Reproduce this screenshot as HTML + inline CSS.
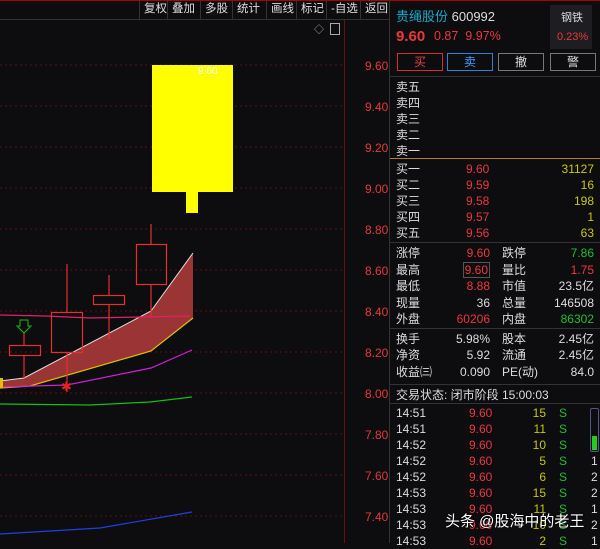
<!DOCTYPE html><html><head><meta charset="utf-8"><style>
body{margin:0;width:600px;height:543px;background:#0d0d10;overflow:hidden;position:relative;font-family:"Liberation Sans","Noto Sans CJK SC",sans-serif;font-size:12px;color:#ddd}
.a{position:absolute;white-space:nowrap}
.r{color:#e8383c}.y{color:#c8c800}.g{color:#1bbf2c}.w{color:#ddd}.c{color:#1aa8c8}
.tb{position:absolute;top:0;height:19px;line-height:19px;color:#ddd;font-size:11.5px;border-left:1px solid #333;padding:0 4px}
.row{position:absolute;left:396px;width:200px;height:16px;line-height:16px;font-size:12px}
.row span{position:absolute}
</style></head><body>
<div class="a" style="left:0;top:0;width:600px;height:1px;background:#a00"></div>
<div class="a" style="left:0;top:19px;width:390px;height:1px;background:#333"></div>
<div class="tb" style="left:139px">复权</div><div class="tb" style="left:167px">叠加</div><div class="tb" style="left:200px">多股</div><div class="tb" style="left:232px">统计</div><div class="tb" style="left:266px">画线</div><div class="tb" style="left:296px">标记</div><div class="tb" style="left:326px">-自选</div><div class="tb" style="left:360px">返回</div>
<div class="a" style="left:314px;top:21px;color:#aaa;font-size:10px">◇</div>
<div class="a" style="left:330px;top:23px;width:8px;height:10px;border:1px solid #aaa"></div>
<div class="a" style="left:344px;top:20px;width:1px;height:523px;background:#6a1010"></div>
<div class="a" style="left:389px;top:0;width:1px;height:543px;background:#333"></div>
<svg class="a" style="left:0;top:0" width="390" height="543">
<g stroke="#5a1010" stroke-dasharray="2,3" stroke-width="1">
<line x1="0" y1="65" x2="344" y2="65"/><line x1="0" y1="106" x2="344" y2="106"/><line x1="0" y1="147" x2="344" y2="147"/><line x1="0" y1="188" x2="344" y2="188"/><line x1="0" y1="229" x2="344" y2="229"/><line x1="0" y1="270" x2="344" y2="270"/><line x1="0" y1="311" x2="344" y2="311"/><line x1="0" y1="352" x2="344" y2="352"/><line x1="0" y1="393" x2="344" y2="393"/><line x1="0" y1="434" x2="344" y2="434"/><line x1="0" y1="475" x2="344" y2="475"/><line x1="0" y1="516" x2="344" y2="516"/></g>
<polygon points="0,381 24,378 151,311 193,253 193,318 151,351 30,386 0,388" fill="#9b3535"/>
<polyline points="0,381 24,378 151,311 193,253" fill="none" stroke="#ddd" stroke-width="1"/>
<polyline points="0,388 30,386 151,351 193,318" fill="none" stroke="#e0c000" stroke-width="1.2"/>
<polyline points="0,387 67,385 151,368 192,350" fill="none" stroke="#d020d0" stroke-width="1.2"/>
<polyline points="0,315 45,316 90,318 190,316" fill="none" stroke="#e0206a" stroke-width="1.2"/>
<polyline points="0,404 90,405 150,402 192,397" fill="none" stroke="#10c010" stroke-width="1.2"/>
<polyline points="0,534 100,528 192,512" fill="none" stroke="#2040e0" stroke-width="1.2"/>
<g stroke="#e03030" fill="none" stroke-width="1.2">
<line x1="24" y1="332" x2="24" y2="345"/><line x1="24" y1="356" x2="24" y2="378"/><rect x="9.5" y="345.5" width="31" height="10"/>
<line x1="67" y1="264" x2="67" y2="312"/><line x1="67" y1="352" x2="67" y2="392"/><rect x="51.5" y="312.5" width="31" height="40"/>
<line x1="109" y1="275" x2="109" y2="295"/><line x1="109" y1="304" x2="109" y2="339"/><rect x="93.5" y="295.5" width="31" height="9"/>
<line x1="151" y1="224" x2="151" y2="244"/><line x1="151" y1="284" x2="151" y2="316"/><rect x="136.5" y="244.5" width="30" height="40"/></g>
<rect x="152" y="65" width="81" height="127" fill="#ffff00"/><rect x="186" y="192" width="12" height="21" fill="#ffff00"/>
<text x="198" y="74" fill="#fff" font-size="10" font-family="Liberation Sans">9.60</text>
<path d="M20,320 h8 v6 h3 l-7,7 l-7,-7 h3z" fill="none" stroke="#10c010"/>
<text x="61" y="391" fill="#f02020" font-size="13">✱</text>
<rect x="0" y="378" width="3" height="10" fill="#e0c000"/>
<g fill="#e03a3a" font-size="12" font-family="Liberation Sans">
<text x="365" y="70">9.60</text><text x="365" y="111">9.40</text><text x="365" y="152">9.20</text><text x="365" y="193">9.00</text><text x="365" y="234">8.80</text><text x="365" y="275">8.60</text><text x="365" y="316">8.40</text><text x="365" y="357">8.20</text><text x="365" y="398">8.00</text><text x="365" y="439">7.80</text><text x="365" y="480">7.60</text><text x="365" y="521">7.40</text></g>
</svg>
<div class="a c" style="left:396px;top:6px;font-size:13px">贵绳股份 <span class="w">600992</span></div>
<div class="a r" style="left:396px;top:28px;font-size:15px;font-weight:bold">9.60</div>
<div class="a r" style="left:434px;top:29px;font-size:12.5px">0.87&nbsp; 9.97%</div>
<div class="a" style="left:550px;top:5px;width:42px;height:44px;background:#1e1e22"></div>
<div class="a w" style="left:561px;top:9px;font-size:11px">钢铁</div>
<div class="a r" style="left:557px;top:31px;font-size:11px">0.23%</div>
<div class="a" style="left:397px;top:53px;width:44px;height:16px;border:1px solid #d03030;color:#e04040;text-align:center;line-height:16px">买</div>
<div class="a" style="left:447px;top:53px;width:44px;height:16px;border:1px solid #3080d0;color:#40a0ff;text-align:center;line-height:16px">卖</div>
<div class="a" style="left:498px;top:53px;width:44px;height:16px;border:1px solid #777;text-align:center;line-height:16px">撤</div>
<div class="a" style="left:550px;top:53px;width:44px;height:16px;border:1px solid #777;text-align:center;line-height:16px">警</div>
<div class="a" style="left:390px;top:76px;width:210px;height:1px;background:#333"></div>
<div class="row" style="top:79px">卖五</div><div class="row" style="top:95px">卖四</div><div class="row" style="top:111px">卖三</div><div class="row" style="top:127px">卖二</div><div class="row" style="top:143px">卖一</div>
<div class="a" style="left:390px;top:158px;width:210px;height:1px;background:#b08020"></div>
<div class="row" style="top:161px">买一<span class="r" style="left:70px">9.60</span><span class="y" style="right:2px">31127</span></div>
<div class="row" style="top:177px">买二<span class="r" style="left:70px">9.59</span><span class="y" style="right:2px">16</span></div>
<div class="row" style="top:193px">买三<span class="r" style="left:70px">9.58</span><span class="y" style="right:2px">198</span></div>
<div class="row" style="top:209px">买四<span class="r" style="left:70px">9.57</span><span class="y" style="right:2px">1</span></div>
<div class="row" style="top:225px">买五<span class="r" style="left:70px">9.56</span><span class="y" style="right:2px">63</span></div>
<div class="a" style="left:390px;top:242px;width:210px;height:1px;background:#333"></div>
<div class="row" style="top:245px">涨停<span class="r" style="right:106px">9.60</span><span style="left:106px">跌停</span><span class="g" style="right:2px">7.86</span></div>
<div class="row" style="top:262px">最高<span class="r" style="right:106px;border:1px solid #555;line-height:14px;padding:0 1px">9.60</span><span style="left:106px">量比</span><span class="r" style="right:2px">1.75</span></div>
<div class="row" style="top:278px">最低<span class="r" style="right:106px">8.88</span><span style="left:106px">市值</span><span style="right:2px">23.5亿</span></div>
<div class="row" style="top:295px">现量<span style="right:106px">36</span><span style="left:106px">总量</span><span style="right:2px">146508</span></div>
<div class="row" style="top:311px">外盘<span class="r" style="right:106px">60206</span><span style="left:106px">内盘</span><span class="g" style="right:2px">86302</span></div>
<div class="a" style="left:390px;top:328px;width:210px;height:1px;background:#333"></div>
<div class="row" style="top:331px">换手<span style="right:106px">5.98%</span><span style="left:106px">股本</span><span style="right:2px">2.45亿</span></div>
<div class="row" style="top:347px">净资<span style="right:106px">5.92</span><span style="left:106px">流通</span><span style="right:2px">2.45亿</span></div>
<div class="row" style="top:364px">收益㈢<span style="right:106px">0.090</span><span style="left:106px">PE(动)</span><span style="right:2px">84.0</span></div>
<div class="a" style="left:390px;top:384px;width:210px;height:1px;background:#333"></div>
<div class="row" style="top:387px">交易状态: 闭市阶段 15:00:03</div>
<div class="a" style="left:390px;top:403px;width:210px;height:1px;background:#333"></div>
<div class="row" style="top:405px">14:51<span class="r" style="left:73px">9.60</span><span class="y" style="right:50px">15</span><span class="g" style="left:163px">S</span></div>
<div class="row" style="top:421px">14:51<span class="r" style="left:73px">9.60</span><span class="y" style="right:50px">11</span><span class="g" style="left:163px">S</span></div>
<div class="row" style="top:437px">14:52<span class="r" style="left:73px">9.60</span><span class="y" style="right:50px">10</span><span class="g" style="left:163px">S</span></div>
<div class="row" style="top:453px">14:52<span class="r" style="left:73px">9.60</span><span class="y" style="right:50px">5</span><span class="g" style="left:163px">S</span><span style="left:195px">1</span></div>
<div class="row" style="top:469px">14:52<span class="r" style="left:73px">9.60</span><span class="y" style="right:50px">6</span><span class="g" style="left:163px">S</span><span style="left:195px">2</span></div>
<div class="row" style="top:485px">14:53<span class="r" style="left:73px">9.60</span><span class="y" style="right:50px">15</span><span class="g" style="left:163px">S</span><span style="left:195px">2</span></div>
<div class="row" style="top:501px">14:53<span class="r" style="left:73px">9.60</span><span class="y" style="right:50px">11</span><span class="g" style="left:163px">S</span><span style="left:195px">1</span></div>
<div class="row" style="top:517px">14:53<span class="r" style="left:73px">9.60</span><span class="y" style="right:50px">10</span><span class="g" style="left:163px">S</span><span style="left:195px">2</span></div>
<div class="row" style="top:533px">14:53<span class="r" style="left:73px">9.60</span><span class="y" style="right:50px">2</span><span class="g" style="left:163px">S</span><span style="left:195px">1</span></div>
<div class="a" style="left:590px;top:408px;width:7px;height:42px;border:1px solid #558;border-radius:2px"></div>
<div class="a" style="left:592px;top:436px;width:5px;height:14px;background:#2c2"></div>
<div class="a" style="left:445px;top:510px;font-size:15px;color:#fff;text-shadow:0 0 2px #000">头条 @股海中的老王</div>
</body></html>
